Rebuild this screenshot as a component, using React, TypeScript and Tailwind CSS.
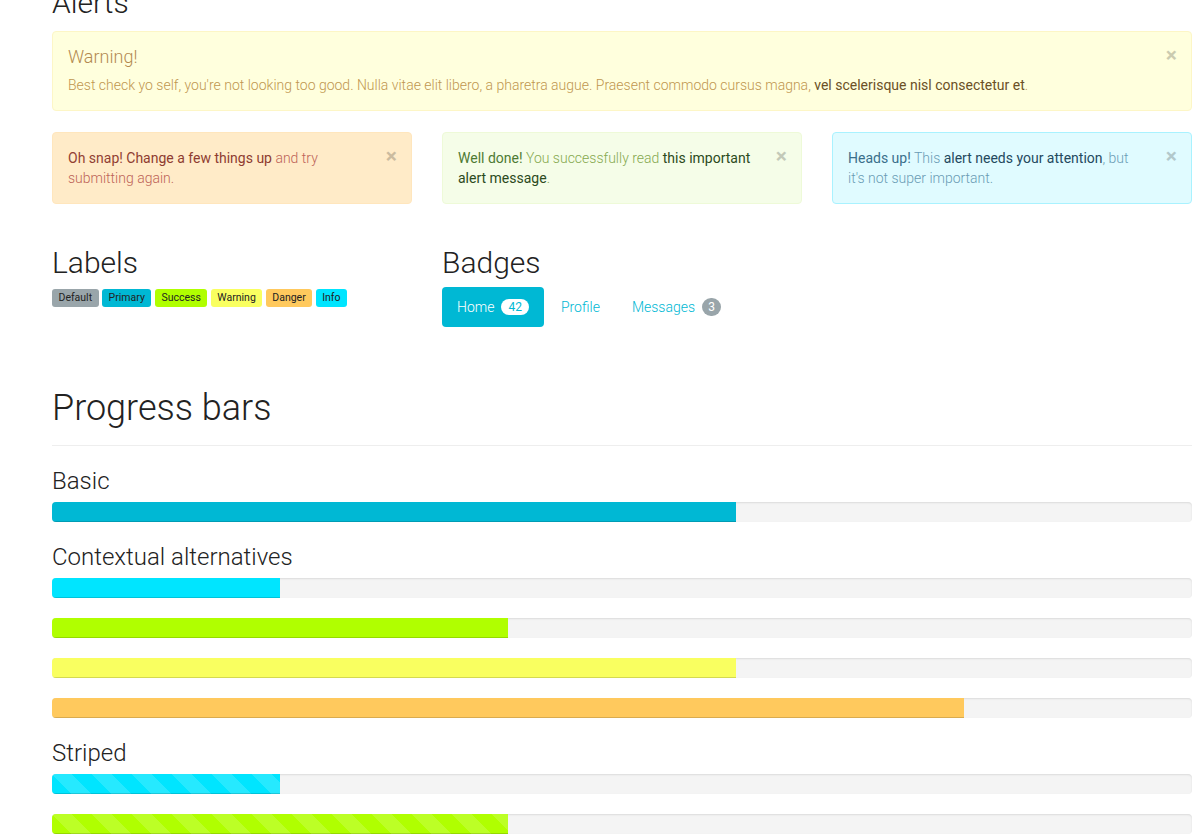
import React from "react";

const stripe =
  "bg-[linear-gradient(45deg,rgba(255,255,255,.15)_25%,transparent_25%,transparent_50%,rgba(255,255,255,.15)_50%,rgba(255,255,255,.15)_75%,transparent_75%,transparent)] bg-[length:40px_40px]";

function Close() {
  return (
    <span className="relative right-[-21px] top-[-2px] float-right text-[21px] font-bold leading-[21px] text-black opacity-20">
      ×
    </span>
  );
}

function Bar({ pct, color, striped }: { pct: number; color: string; striped?: boolean }) {
  return (
    <div className="mb-[20px] h-[20px] overflow-hidden rounded-[4px] bg-[#f4f4f4] shadow-[inset_0_1px_2px_rgba(0,0,0,0.1)]">
      <div
        className={`h-full ${color} shadow-[inset_0_-1px_0_rgba(0,0,0,0.15)] ${striped ? stripe : ""}`}
        style={{ width: `${pct}%` }}
      />
    </div>
  );
}

function H3({ children }: { children: React.ReactNode }) {
  return <h3 className="mb-[8px] pt-[2px] text-[24px] font-light leading-[26px] text-[#222]">{children}</h3>;
}

export default function App() {
  return (
    <div
      className="min-h-[839px] bg-white text-[14px] font-light leading-[20px] text-[#222]"
      style={{ fontFamily: "Roboto, 'Noto Sans', sans-serif" }}
    >
      <div className="ml-[52px] mt-[-14px] w-[1140px]">
        <h2 className="mb-[12px] text-[30px] font-light leading-[33px] text-[#222]">Alerts</h2>

        <div className="mb-[21px] rounded-[4px] border border-[#fdf6c6] bg-[#ffffdd] py-[15px] pl-[15px] pr-[35px] text-[#c0964f]">
          <Close />
          <h4 className="mb-[8px] text-[18px] font-light leading-[20px] text-[#b38a50]">Warning!</h4>
          <p>
            Best check yo self, you're not looking too good. Nulla vitae elit libero, a pharetra augue. Praesent
            commodo cursus magna, <span className="font-normal text-[#6b5026]">vel scelerisque nisl consectetur et</span>.
          </p>
        </div>

        <div className="grid grid-cols-3 gap-[30px]">
          <div className="rounded-[4px] border border-[#ffe6bd] bg-[#ffebc8] py-[15px] pl-[15px] pr-[35px] text-[#bd6357]">
            <Close />
            <span className="font-normal text-[#923f33]">Oh snap!</span>{" "}
            <span className="font-normal text-[#8e3b30]">Change a few things up</span> and try submitting again.
          </div>
          <div className="rounded-[4px] border border-[#eefad8] bg-[#f5fde8] py-[15px] pl-[15px] pr-[35px] text-[#86a94f]">
            <Close />
            <span className="font-normal text-[#4e7a33]">Well done!</span> You successfully read{" "}
            <span className="font-normal text-[#2c4a20]">this important alert message</span>.
          </div>
          <div className="rounded-[4px] border border-[#a9f2ff] bg-[#e0fbff] py-[15px] pl-[15px] pr-[35px] text-[#6a9bb5]">
            <Close />
            <span className="font-normal text-[#3a6f8b]">Heads up!</span> This{" "}
            <span className="font-normal text-[#24495e]">alert needs your attention</span>, but it's not super
            important.
          </div>
        </div>

        <div className="mt-[42px] grid grid-cols-3 gap-[30px]">
          <div>
            <h2 className="mb-[10px] text-[30px] font-light leading-[33px] text-[#222]">Labels</h2>
            <div className="flex gap-[3.5px] text-[10.5px] font-normal leading-[18px] text-[#222]">
              <span className="rounded-[3px] bg-[#99a5aa] px-[6.5px]">Default</span>
              <span className="rounded-[3px] bg-[#00b8d4] px-[6.5px]">Primary</span>
              <span className="rounded-[3px] bg-[#b0ff00] px-[6.5px]">Success</span>
              <span className="rounded-[3px] bg-[#f9ff60] px-[6.5px]">Warning</span>
              <span className="rounded-[3px] bg-[#ffc95d] px-[6.5px]">Danger</span>
              <span className="rounded-[3px] bg-[#00e5ff] px-[6.5px]">Info</span>
            </div>
          </div>
          <div>
            <h2 className="mb-[8px] text-[30px] font-light leading-[33px] text-[#222]">Badges</h2>
            <div className="flex gap-[2px] text-[14px] font-light text-[#00b8d4]">
              <div className="flex items-center rounded-[4px] bg-[#00b8d4] px-[15px] py-[10px] text-white">
                Home
                <span className="ml-[7px] rounded-[10px] bg-white px-[7px] text-[12px] font-normal leading-[16px] text-[#00b8d4]">
                  42
                </span>
              </div>
              <div className="flex items-center rounded-[4px] px-[15px] py-[10px]">Profile</div>
              <div className="flex items-center rounded-[4px] px-[15px] py-[10px]">
                Messages
                <span className="ml-[7px] flex h-[18px] w-[19px] items-center justify-center rounded-full bg-[#99a5aa] text-[12px] font-normal leading-[16px] text-white">
                  3
                </span>
              </div>
            </div>
          </div>
          <div />
        </div>

        <div className="mb-[20px] mt-[59px] border-b border-[#eeeeee] pb-[9px]">
          <h1 className="mb-[8px] pt-[2px] text-[36px] font-light leading-[40px] text-[#222]">Progress bars</h1>
        </div>

        <H3>Basic</H3>
        <Bar pct={60} color="bg-[#00b8d4]" />

        <H3>Contextual alternatives</H3>
        <Bar pct={20} color="bg-[#00e5ff]" />
        <Bar pct={40} color="bg-[#b0ff00]" />
        <Bar pct={60} color="bg-[#f9ff60]" />
        <Bar pct={80} color="bg-[#ffc95d]" />

        <H3>Striped</H3>
        <Bar pct={20} color="bg-[#00e5ff]" striped />
        <Bar pct={40} color="bg-[#b0ff00]" striped />
        <Bar pct={60} color="bg-[#f9ff60]" striped />
      </div>
    </div>
  );
}
